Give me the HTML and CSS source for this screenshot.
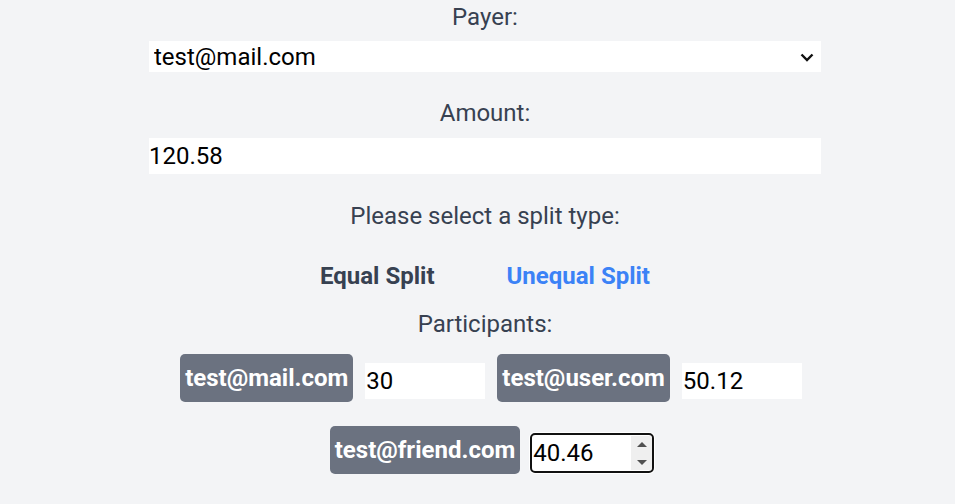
FILE: index.html
```html
<!DOCTYPE html>
<html>
<head>
<meta charset="utf-8">
<link rel="stylesheet" href="styles.css">
</head>
<body>
<div class="form">
  <label class="label payer-label">Payer:</label>
  <div class="select-wrap">
    <select class="select">
      <option>test@mail.com</option>
      <option>test@user.com</option>
      <option>test@friend.com</option>
    </select>
    <svg class="chevron" width="14" height="9" viewBox="0 0 14 9"><path d="M1.5 1.5 L7 7 L12.5 1.5" fill="none" stroke="#111" stroke-width="2.4"/></svg>
  </div>
  <label class="label amount-label">Amount:</label>
  <input class="amount" type="text" value="120.58">
  <p class="label split-label">Please select a split type:</p>
  <div class="split-types">
    <button class="split-btn">Equal Split</button>
    <button class="split-btn active">Unequal Split</button>
  </div>
  <p class="label participants-label">Participants:</p>
  <div class="participants">
    <div class="pair"><span class="badge">test@mail.com</span><span class="field"><input class="share" type="number" value="30"></span></div>
    <div class="pair"><span class="badge">test@user.com</span><span class="field"><input class="share" type="number" value="50.12"></span></div>
    <div class="pair"><span class="badge">test@friend.com</span><span class="field"><input class="share focused" type="number" value="40.46"><span class="spinner"><svg width="10" height="5" viewBox="0 0 10 5"><path d="M0 5 L5 0 L10 5 Z" fill="#505050"/></svg><svg width="10" height="5" viewBox="0 0 10 5"><path d="M0 0 L5 5 L10 0 Z" fill="#505050"/></svg></span></span></div>
  </div>
</div>
</body>
</html>
```
FILE: styles.css
```css
html, body {
  margin: 0;
  padding: 0;
  background: #f3f4f6;
}
body {
  font-family: Roboto, "Liberation Sans", sans-serif;
  color: #374151;
  width: 955px;
  height: 504px;
  overflow: hidden;
}
.form {
  width: 672px;
  margin-left: 149px;
  display: flex;
  flex-direction: column;
}
.label {
  display: block;
  margin: 0;
  text-align: center;
  font-size: 24px;
  line-height: 32px;
  color: #374151;
}
.payer-label { margin-top: 1px; }
.select-wrap {
  position: relative;
  margin-top: 8px;
  height: 31px;
}
.select {
  -webkit-appearance: none;
  appearance: none;
  display: block;
  height: 31px;
  width: 672px;
  border: none;
  background: #ffffff;
  font-family: Roboto, "Liberation Sans", sans-serif;
  font-size: 24px;
  color: #000;
  padding: 0 5px;
  border-radius: 0;
  outline: none;
}
.chevron {
  position: absolute;
  right: 7px;
  top: 12px;
  pointer-events: none;
}
.amount-label { margin-top: 25px; }
.amount {
  margin-top: 9px;
  width: 672px;
  height: 36px;
  box-sizing: border-box;
  border: none;
  padding: 0;
  font-family: Roboto, "Liberation Sans", sans-serif;
  font-size: 24px;
  color: #000;
  background: #fff;
  outline: none;
}
.split-label { margin-top: 26px; }
.split-types {
  margin-top: 28px;
  display: flex;
  justify-content: center;
  gap: 72px;
}
.split-btn {
  border: none;
  background: none;
  padding: 0;
  font-family: Roboto, "Liberation Sans", sans-serif;
  font-size: 24px;
  line-height: 32px;
  font-weight: 700;
  color: #374151;
}
.split-btn.active { color: #3b82f6; }
.participants-label { margin-top: 16px; }
.participants {
  margin-top: 14px;
  display: flex;
  flex-wrap: wrap;
  justify-content: center;
  row-gap: 24px;
}
.pair {
  display: flex;
  align-items: center;
}
.badge {
  margin-left: 12px;
  background: #6b7280;
  color: #ffffff;
  font-weight: 700;
  font-size: 24px;
  line-height: 32px;
  padding: 8px 5px;
  border-radius: 5px;
}
.field {
  position: relative;
  display: block;
  margin-left: 12px;
  margin-top: 6px;
  width: 120px;
  height: 36px;
}
.share {
  display: block;
  width: 120px;
  height: 36px;
  box-sizing: border-box;
  border: none;
  padding: 0 1px;
  font-family: Roboto, "Liberation Sans", sans-serif;
  font-size: 24px;
  color: #000;
  background: #fff;
  outline: none;
  -moz-appearance: textfield;
}
.share::-webkit-inner-spin-button,
.share::-webkit-outer-spin-button {
  -webkit-appearance: none;
  margin: 0;
}
.share.focused {
  outline: 2px solid #111111;
  outline-offset: 0;
  border-radius: 3px;
  box-shadow: 0 0 0 3px #ffffff;
}
.spinner {
  position: absolute;
  right: 0;
  top: 1px;
  bottom: 1px;
  width: 21px;
  background: #efefef;
  display: flex;
  flex-direction: column;
  align-items: center;
  justify-content: space-between;
  padding: 6px 0 5px;
  box-sizing: border-box;
  border-radius: 0 3px 3px 0;
}
.spinner svg { display: block; }
```
